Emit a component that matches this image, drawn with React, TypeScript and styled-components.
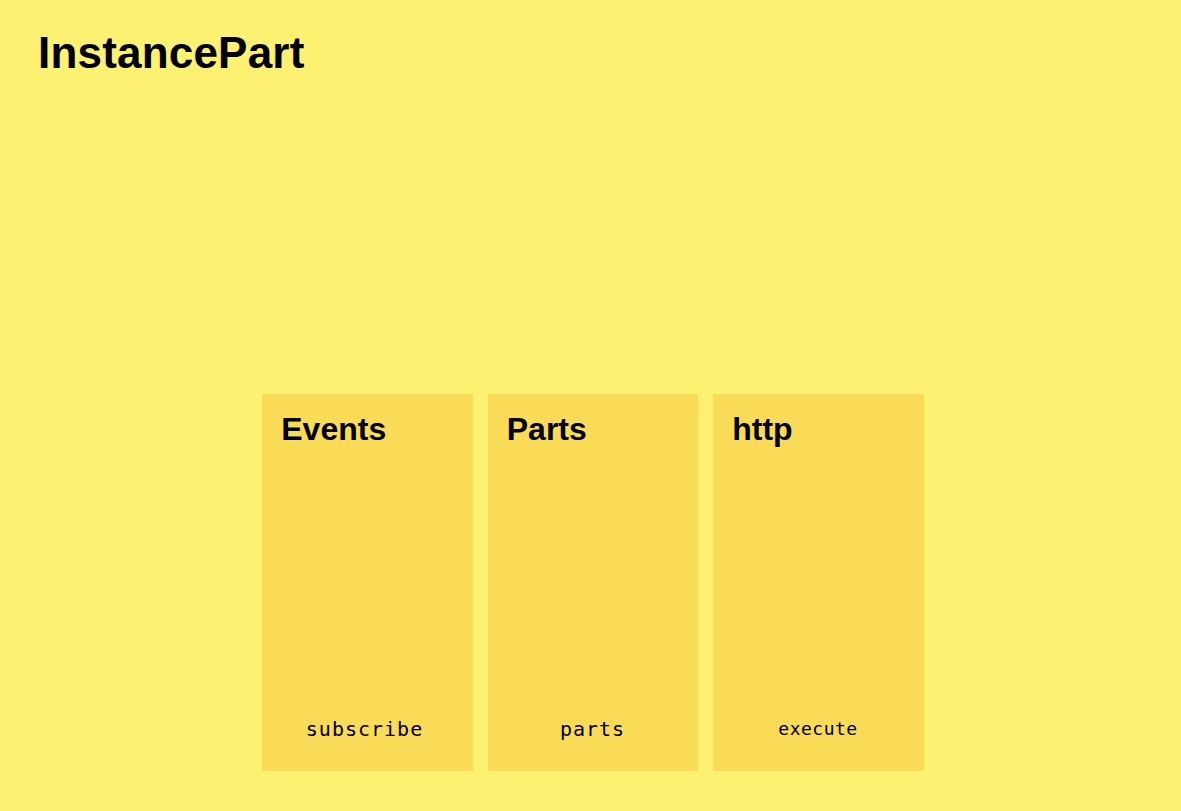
import styled, { createGlobalStyle, css } from "styled-components";

const GlobalStyle = createGlobalStyle`
    html, body {
        margin: 0;
        padding: 0;
        background-color: #fdf172;
    }
`

const Page = styled.div`
    min-height: 100vh;
    box-sizing: border-box;
    display: flex;
    flex-direction: column;
    padding: 28px 38px 40px;
    font-family: "Liberation Sans", Arial, sans-serif;
    color: #000;
`

const Heading = styled.h1`
    margin: 0;
    font-size: 44px;
    font-weight: bold;
    line-height: normal;
    letter-spacing: 0.2px;
`

const Row = styled.div`
    margin-top: auto;
    display: flex;
    justify-content: center;
    gap: 15px;
    padding-left: 5px;
`

const Card = styled.div`
    width: 210.5px;
    height: 377px;
    box-sizing: border-box;
    padding: 17px 19px 30px;
    background-color: #f9db58;
    display: flex;
    flex-direction: column;
`

const CardTitle = styled.h2`
    margin: 0;
    font-size: 32px;
    font-weight: bold;
    line-height: normal;
`

const Method = styled.code<{$small?: boolean, $shift?: number}>`
    margin-top: auto;
    text-align: center;
    font-family: "DejaVu Sans Mono", "Liberation Mono", monospace;
    font-size: 20px;
    line-height: 24px;
    letter-spacing: 1px;
    margin-right: ${props => props.$shift ?? 0}px;

    ${props => props.$small && css`
        font-size: 18px;
        letter-spacing: 0.5px;
    `}
`

const parts = [
    { title: "Events", method: "subscribe", shift: 6 },
    { title: "Parts", method: "parts", shift: 1 },
    { title: "http", method: "execute", small: true, shift: 1 },
]

export default function App() {
    return (
        <>
            <GlobalStyle />
            <Page>
                <Heading>InstancePart</Heading>
                <Row>
                    {parts.map((p) => (
                        <Card key={p.title}>
                            <CardTitle>{p.title}</CardTitle>
                            <Method $small={p.small} $shift={p.shift}>{p.method}</Method>
                        </Card>
                    ))}
                </Row>
            </Page>
        </>
    )
}
